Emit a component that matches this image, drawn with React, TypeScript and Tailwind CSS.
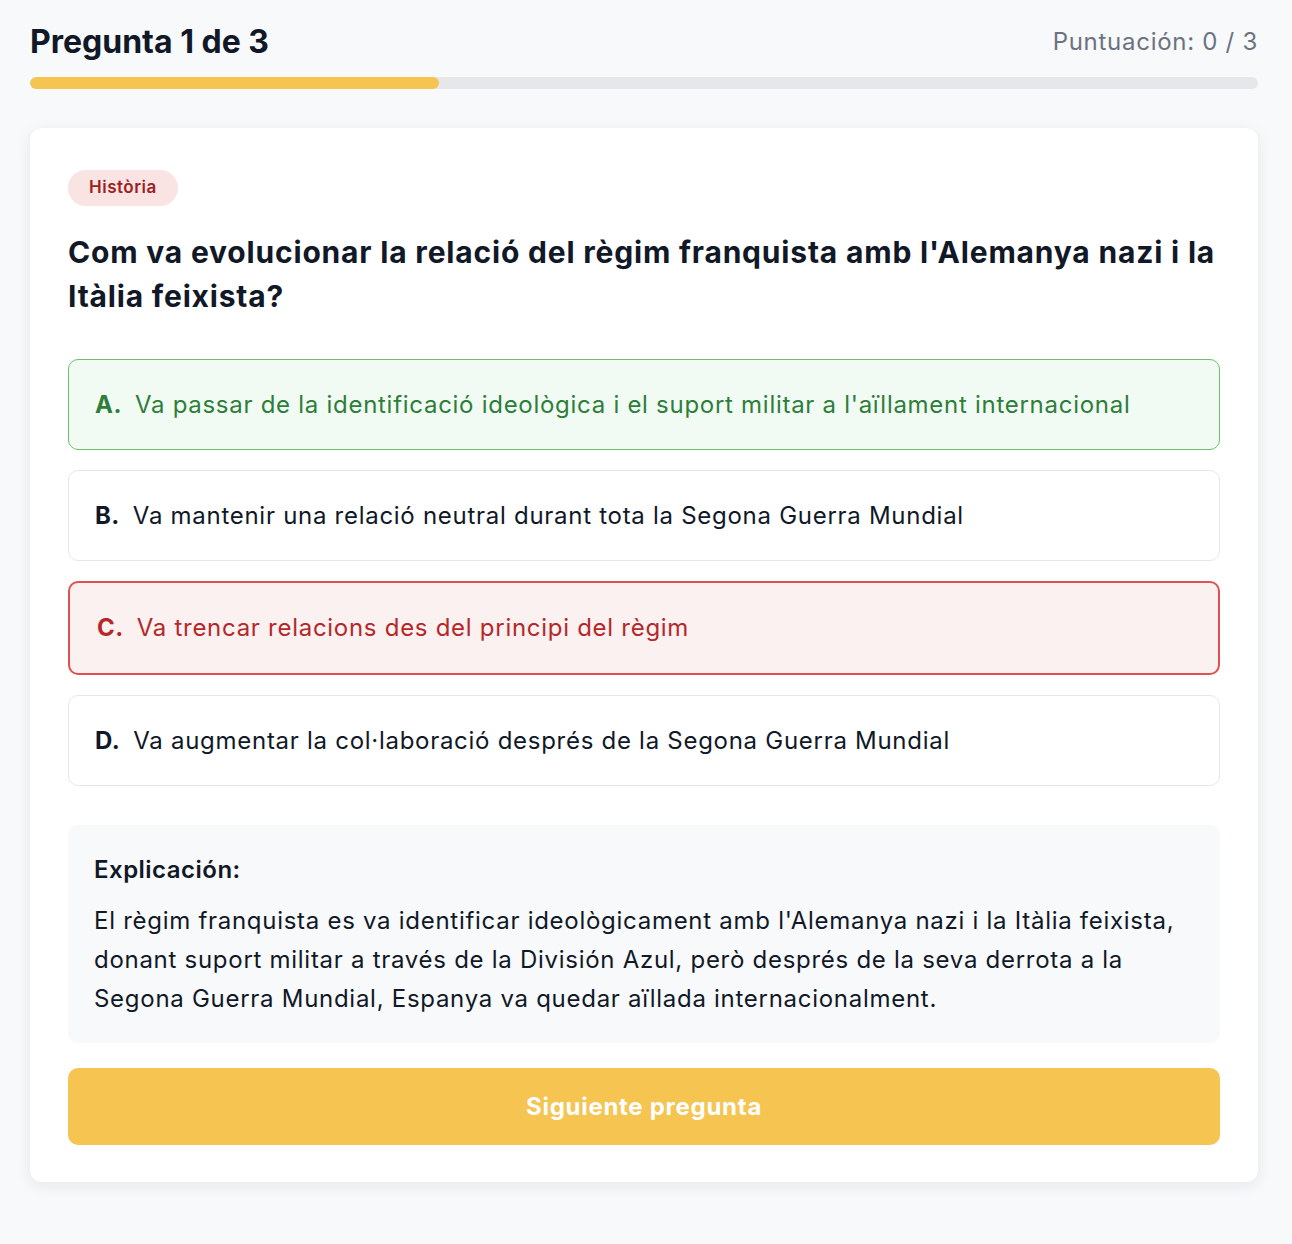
import React from "react";

type Option = { key: string; text: string; state: "correct" | "wrong" | "idle" };

const options: Option[] = [
  { key: "A", text: "Va passar de la identificació ideològica i el suport militar a l'aïllament internacional", state: "correct" },
  { key: "B", text: "Va mantenir una relació neutral durant tota la Segona Guerra Mundial", state: "idle" },
  { key: "C", text: "Va trencar relacions des del principi del règim", state: "wrong" },
  { key: "D", text: "Va augmentar la col·laboració després de la Segona Guerra Mundial", state: "idle" },
];

function OptionRow({ opt }: { opt: Option }) {
  const styles = {
    correct: "border border-[#6cc070] bg-[#f1fbf3] text-[#2e7d3a] px-[26px] py-[26.5px]",
    wrong: "border-2 border-[#e05252] bg-[#fcf1f1] text-[#b4282a] px-[27px] py-[27px]",
    idle: "border border-[#e5e7eb] bg-white text-[#111827] px-[26px] py-[26.5px]",
  }[opt.state];

  return (
    <div className={`flex items-center rounded-[10px] text-[24px] leading-[36px] tracking-[0.03em] ${styles}`}>
      <span className="mr-[13px] font-bold tracking-[0.02em]">{opt.key}.</span>
      <span>{opt.text}</span>
    </div>
  );
}

export default function App() {
  const current = 1;
  const total = 3;

  return (
    <div
      className="min-h-screen bg-[#f8f9fb] pl-[30px] pr-[34px] pt-[21px] pb-[60px]"
      style={{ fontFamily: "Inter, 'Noto Sans', sans-serif" }}
    >
      {/* Header */}
      <div className="flex items-center justify-between">
        <h1 className="text-[32px] leading-[42px] font-bold text-[#111827]">
          Pregunta {current} de {total}
        </h1>
        <span className="text-[24px] leading-[42px] tracking-[0.03em] text-[#6b7280]">Puntuación: 0 / 3</span>
      </div>

      {/* Progress */}
      <div className="mt-[14px] h-[12px] w-full overflow-hidden rounded-full bg-[#e5e7eb]">
        <div className="h-full rounded-full bg-[#f5c451]" style={{ width: `${(current / total) * 100}%` }} />
      </div>

      {/* Card */}
      <div className="mt-[39px] rounded-[12px] bg-white px-[38px] pt-[42px] pb-[37px] shadow-[0_4px_16px_rgba(15,23,42,0.08)]">
        <span className="inline-flex h-[36px] items-center rounded-full bg-[#f9e3e3] px-[21px] text-[17px] font-semibold tracking-[0.03em] text-[#9b2323]">
          Història
        </span>

        <h2 className="mt-[24px] text-[30px] leading-[44px] font-bold tracking-[0.027em] text-[#111827]">
          Com va evolucionar la relació del règim franquista amb l'Alemanya nazi i la Itàlia feixista?
        </h2>

        <div className="mt-[41px] flex flex-col gap-[20px]">
          {options.map((o) => (
            <OptionRow key={o.key} opt={o} />
          ))}
        </div>

        {/* Explanation */}
        <div className="mt-[39px] rounded-[10px] bg-[#f8f9fb] px-[26px] pt-[27px] pb-[25px] text-[#111827]">
          <p className="text-[24px] leading-[36px] font-semibold tracking-[0.02em]">Explicación:</p>
          <p className="mt-[13px] text-[24px] leading-[39px] tracking-[0.03em]">
            El règim franquista es va identificar ideològicament amb l'Alemanya nazi i la Itàlia feixista,
            donant suport militar a través de la División Azul, però després de la seva derrota a la
            Segona Guerra Mundial, Espanya va quedar aïllada internacionalment.
          </p>
        </div>

        <button className="mt-[25px] h-[77px] w-full rounded-[10px] bg-[#f5c451] text-[24px] font-bold tracking-[0.03em] text-white">
          Siguiente pregunta
        </button>
      </div>
    </div>
  );
}
